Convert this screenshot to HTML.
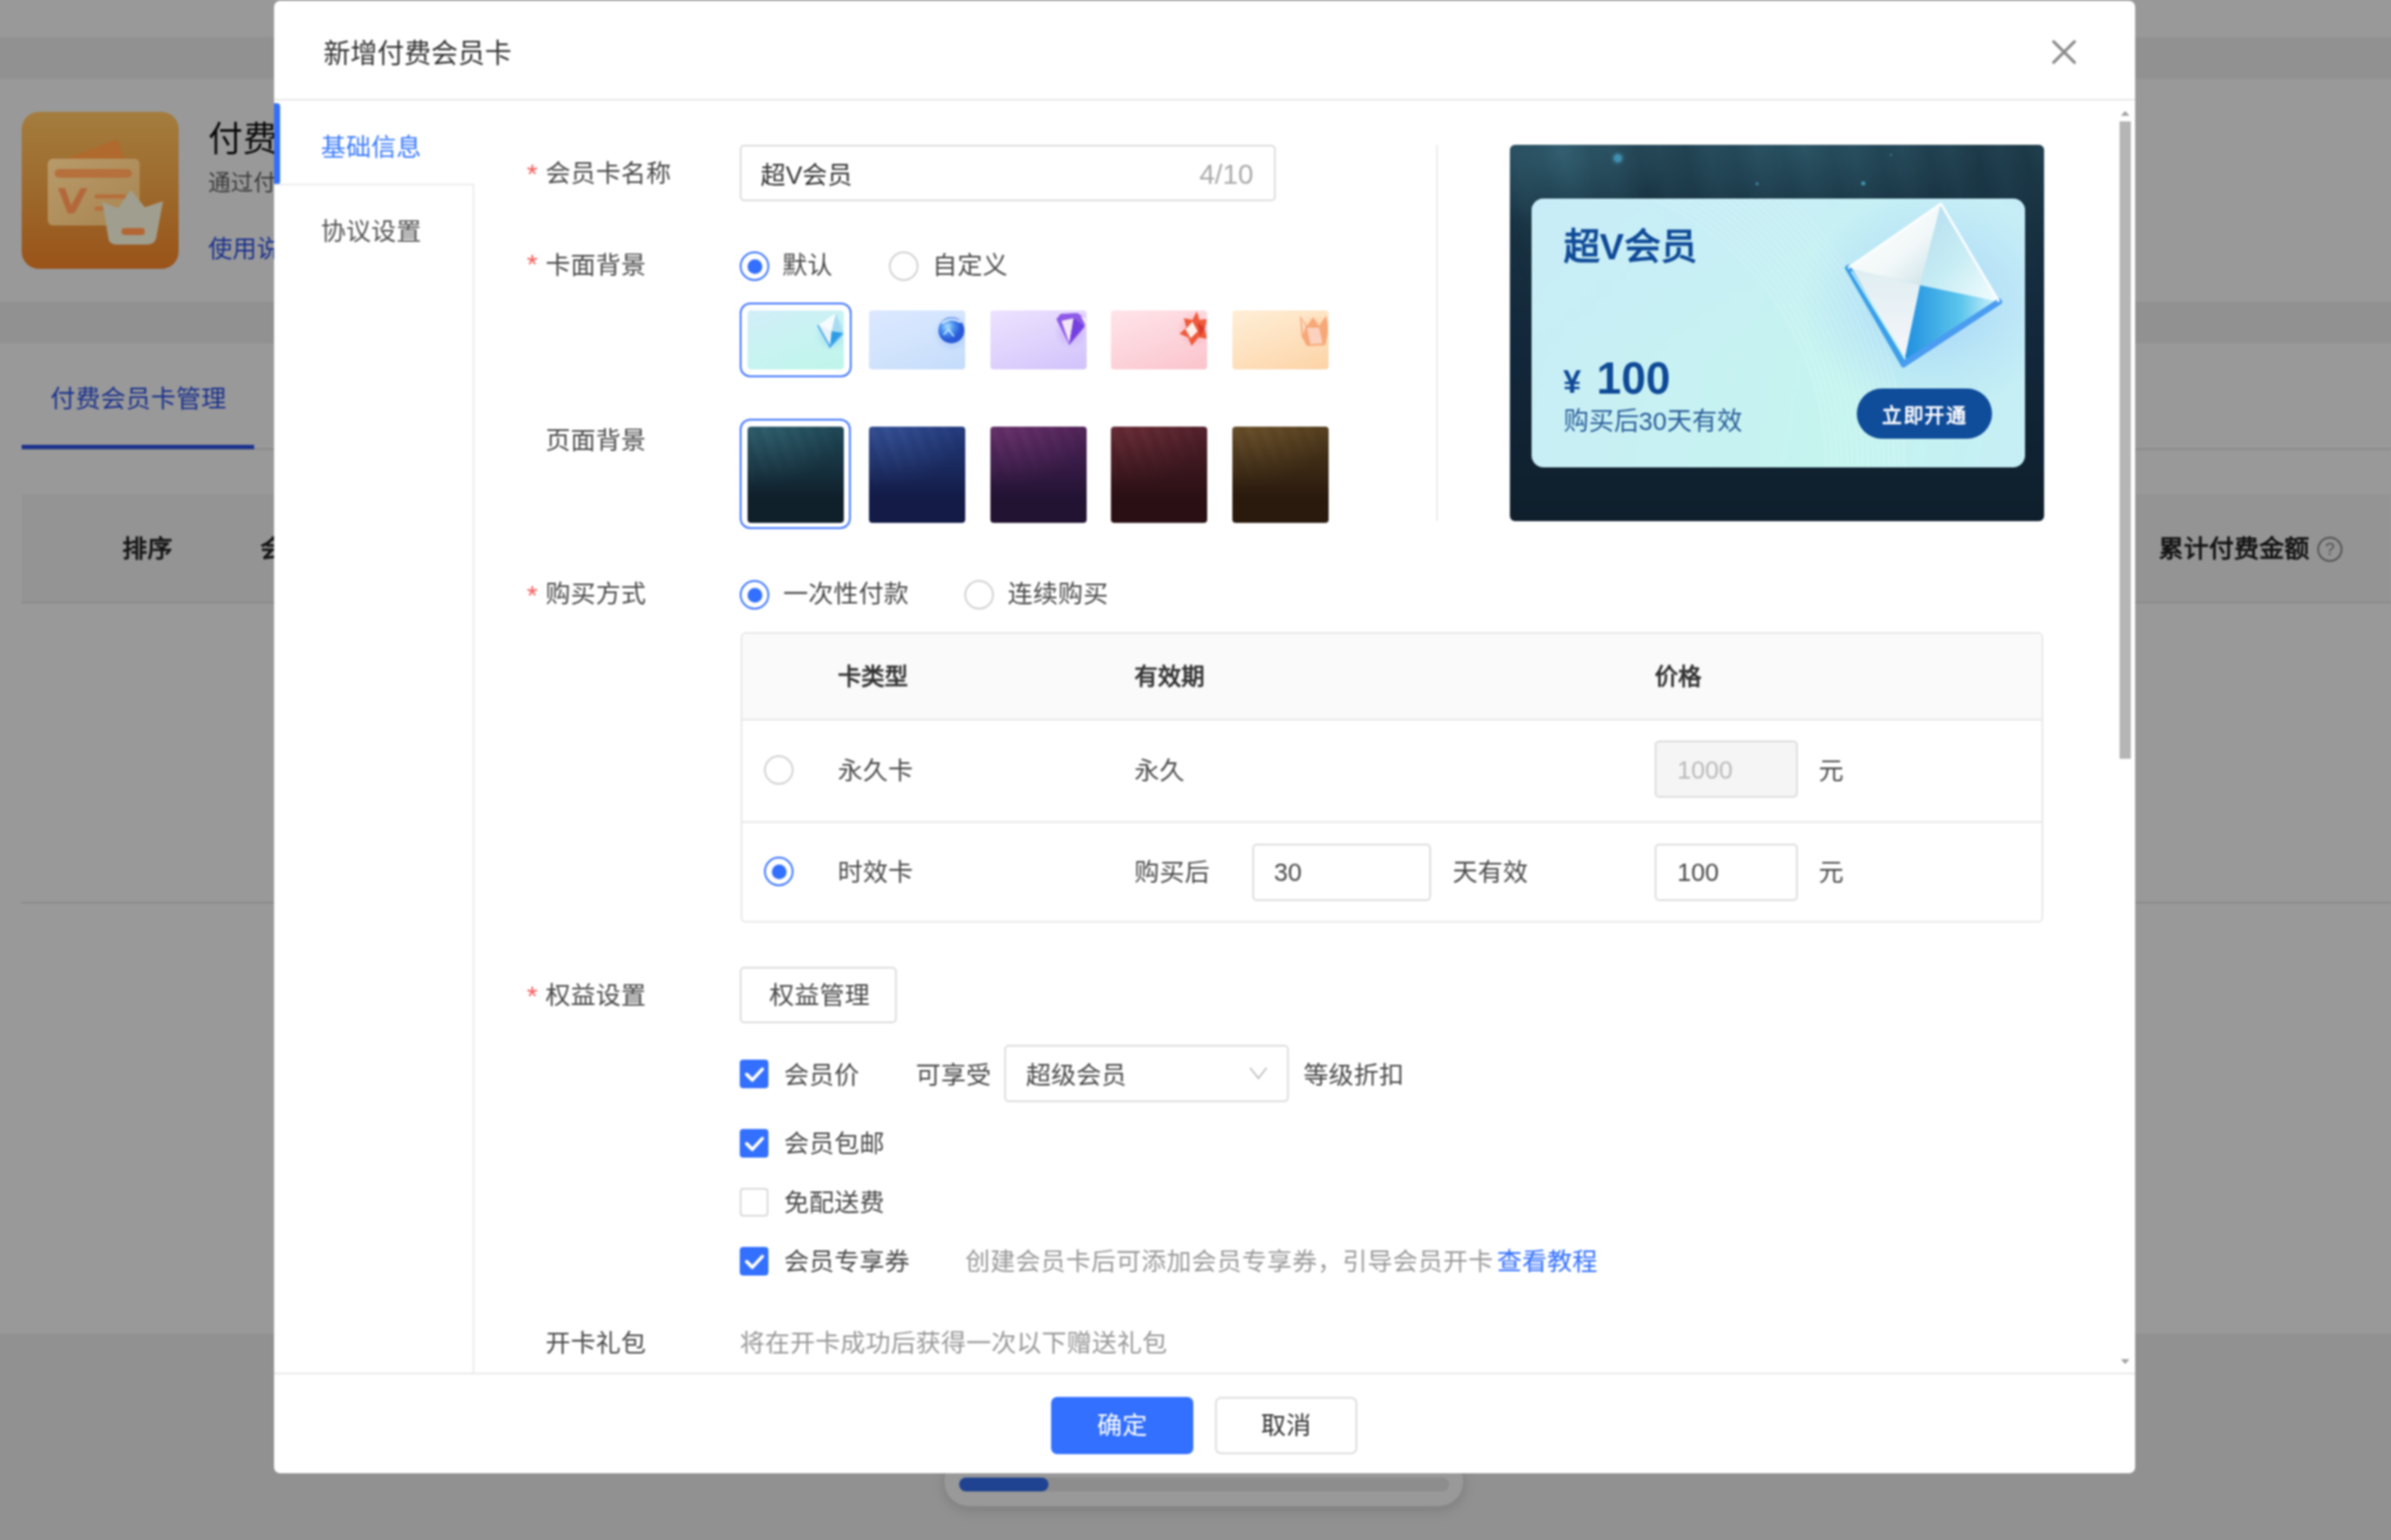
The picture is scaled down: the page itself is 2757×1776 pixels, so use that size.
<!DOCTYPE html>
<html lang="zh-CN">
<head>
<meta charset="utf-8">
<style>
*{box-sizing:border-box;margin:0;padding:0}
html,body{width:2757px;height:1776px;overflow:hidden}
body{position:relative;background:#fff;font-family:"Liberation Sans",sans-serif;color:#4a4a4a}
#root{position:absolute;left:-30px;top:-30px;width:2817px;height:1836px;filter:blur(0.8px)}
#inner{position:absolute;left:30px;top:30px;width:2757px;height:1776px}
.a{position:absolute}
.t{position:absolute;white-space:nowrap;font-size:28.8px;line-height:28.8px}
#page{position:absolute;left:-30px;top:-30px;width:2817px;height:1836px;background:#fff}
#ov{position:absolute;left:-30px;top:-30px;width:2817px;height:1836px;background:rgba(0,0,0,0.4)}
#modal{position:absolute;left:316px;top:1px;width:2146px;height:1698px;background:#fff;border-radius:7px;overflow:hidden}
.req{position:absolute;color:#f45a5a;font-size:32px;line-height:32px}
.lbl{color:#4a4a4a}
.inp{position:absolute;border:2px solid #dcdcdc;border-radius:5px;background:#fff}
.radio{position:absolute;width:34px;height:34px;border-radius:50%;border:2px solid #d0d0d0;background:#fff}
.radio.on{border:2.5px solid #3370ff}
.radio.on::after{content:"";position:absolute;left:50%;top:50%;width:17px;height:17px;margin:-8.5px 0 0 -8.5px;border-radius:50%;background:#3370ff}
.cb{position:absolute;width:33px;height:33px;border-radius:4px;background:#3370ff}
.cb.off{background:#fff;border:2px solid #d9d9d9}
.cb svg{position:absolute;left:0;top:0}
.thumb{position:absolute;width:111px;border-radius:4px;overflow:hidden}
</style>
</head>
<body>
<div id="root"><div id="inner">
<div id="page">
  <!-- bands -->
  <div class="a" style="left:0;top:73px;width:2817px;height:48px;background:#f2f2f2"></div>
  <div class="a" style="left:0;top:378px;width:2817px;height:48px;background:#f2f2f2"></div>
  <div class="a" style="left:0;top:1568px;width:2817px;height:268px;background:#f2f2f2"></div>
  <div class="a" style="left:30px;top:30px;width:2757px;height:1776px">
  <!-- icon -->
  
  <div class="t" style="left:240px;top:140px;font-size:40px;line-height:40px;color:#111">付费会员卡</div>
  <div class="t" style="left:240px;top:198px;font-size:26px;line-height:26px;color:#666">通过付费</div>
  <div class="t" style="left:240px;top:274px;font-size:28px;line-height:28px;color:#2f54eb">使用说明</div>
  <!-- tabs -->
  <div class="t" style="left:58px;top:446px;color:#2f54eb">付费会员卡管理</div>
  <div class="a" style="left:25px;top:517px;width:2732px;height:2px;background:#e8e8e8"></div>
  <div class="a" style="left:25px;top:513px;width:268px;height:5px;background:#2f54eb"></div>
  <!-- table header -->
  <div class="a" style="left:25px;top:570px;width:2732px;height:126px;background:#f7f7f7;border-bottom:2px solid #e6e6e6"></div>
  <div class="t" style="left:141px;top:619px;font-weight:bold;color:#222">排序</div>
  <div class="t" style="left:300px;top:619px;font-weight:bold;color:#222">会员卡</div>
  <div class="t" style="left:2489px;top:619px;font-weight:bold;color:#222">累计付费金额</div>
  <div class="a" style="left:2672px;top:619px;width:29px;height:29px;border-radius:50%;border:2px solid #888;color:#888;font-size:20px;line-height:25px;text-align:center">?</div>
  <div class="a" style="left:25px;top:1040px;width:2732px;height:2px;background:#e6e6e6"></div>
  <!-- bottom scroller pill -->
  <div class="a" style="left:1089px;top:1680px;width:598px;height:57px;border-radius:28px;background:#fff;box-shadow:0 4px 16px rgba(0,0,0,0.15)"></div>
  <div class="a" style="left:1106px;top:1704px;width:565px;height:16px;border-radius:8px;background:#ececec"></div>
  <div class="a" style="left:1106px;top:1704px;width:103px;height:16px;border-radius:8px;background:#3570f0"></div>
</div>
</div>
<div id="ov"></div>
<div class="a" style="left:25px;top:129px;width:181px;height:181px;border-radius:20px;overflow:hidden;background:linear-gradient(180deg,#a47d3e 0%,#9d6a2c 50%,#9a5319 100%)">
  <svg class="a" style="left:0;top:0" width="181" height="181" viewBox="0 0 181 181">
    <defs><linearGradient id="ic1" x1="0" y1="0" x2="1" y2="1"><stop offset="0" stop-color="#b89a6a"/><stop offset="1" stop-color="#a88550"/></linearGradient></defs>
    <path d="M52 54L106 33Q112 32 113 38L119 54Z" fill="#b06a2e"/>
    <rect x="30" y="54" width="106" height="77" rx="6" fill="url(#ic1)"/>
    <rect x="38" y="66" width="89" height="10" rx="5" fill="#b5703c"/>
    <path d="M42 88L50 88L57 108L68 88L76 88L61 117L53 117Z" fill="#b4683a"/>
    <rect x="84" y="95" width="36" height="5" rx="2.5" fill="#b5703c"/>
    <rect x="84" y="109" width="20" height="5" rx="2.5" fill="#b5703c"/>
        <path d="M93 104L111 111L126 90L142 110L163 103L155 146Q153 153 145 153L109 153Q101 153 100 146Z" fill="#a09e8e"/>
    <rect x="115" y="134" width="27" height="8" rx="4" fill="#b36634"/>
  </svg>
</div>

<div id="modal"><div class="a" style="left:-316px;top:-1px;width:2757px;height:1776px">
  <!-- header -->
  <div class="t" style="left:373px;top:46px;font-size:31px;line-height:31px;color:#333">新增付费会员卡</div>
  <svg class="a" style="left:2366px;top:46px" width="28" height="28" viewBox="0 0 28 28"><path d="M2 2L26 26M26 2L2 26" stroke="#8c8c8c" stroke-width="3.4" stroke-linecap="round"/></svg>
  <div class="a" style="left:316px;top:114px;width:2146px;height:2px;background:#e9e9e9"></div>
  <!-- nav -->
  <div class="a" style="left:316px;top:119px;width:7px;height:94px;background:#3370ff;border-radius:0 4px 4px 0"></div>
  <div class="t" style="left:370px;top:156px;color:#3a7afe">基础信息</div>
  <div class="a" style="left:316px;top:212px;width:231px;height:1372px;border-top:2px solid #ececec;border-right:2px solid #ececec"></div>
  <div class="t" style="left:370px;top:253px;color:#555">协议设置</div>

  <!-- row1 -->
  <div class="req" style="left:607.5px;top:184.5px">*</div>
  <div class="t lbl" style="left:629px;top:186px">会员卡名称</div>
  <div class="inp" style="left:853px;top:167px;width:618px;height:65px"></div>
  <div class="t" style="left:877px;top:188px;color:#333">超V会员</div>
  <div class="t" style="left:1383px;top:185px;font-size:32px;line-height:32px;color:#aaa">4/10</div>

  <!-- row2 -->
  <div class="req" style="left:607.5px;top:289px">*</div>
  <div class="t lbl" style="left:629px;top:292px">卡面背景</div>
  <div class="radio on" style="left:853px;top:290px"></div>
  <div class="t" style="left:902px;top:292px">默认</div>
  <div class="radio" style="left:1025px;top:290px"></div>
  <div class="t" style="left:1075px;top:292px">自定义</div>
  <div class="a" style="left:853px;top:349px;width:129px;height:86px;border:2.6px solid #3a72ff;border-radius:12px"></div>
  <div class="thumb" style="left:862px;top:358px;height:68px;background:linear-gradient(160deg,#d2eef8 0%,#c8f3f2 50%,#bff6ea 100%)"><svg class="a" style="left:0;top:0" width="110" height="68" viewBox="0 0 110 68"><defs><radialGradient id="gl1"><stop offset="0" stop-color="#7fc4f0" stop-opacity="0.55"/><stop offset="1" stop-color="#7fc4f0" stop-opacity="0"/></radialGradient></defs><ellipse cx="97" cy="27" rx="20" ry="20" fill="url(#gl1)"/><path d="M102 3L81 17L97 24Z" fill="#f6fcfe"/><path d="M102 3L110 26L97 24Z" fill="#a8dcf2"/><path d="M81 17L95 42L97 24Z" fill="#eaf2f8"/><path d="M97 24L110 26L95 42Z" fill="#2c9ce6"/><path d="M81 17L95 42L110 26" fill="none" stroke="#4aaaf0" stroke-width="2"/></svg></div>
<div class="thumb" style="left:1002px;top:358px;height:68px;background:linear-gradient(160deg,#dce8ff 0%,#d2e4fd 50%,#c4dcfb 100%)"><svg class="a" style="left:0;top:0" width="110" height="68" viewBox="0 0 110 68"><defs><radialGradient id="sp2" cx="0.35" cy="0.35"><stop offset="0" stop-color="#aee0ff"/><stop offset="0.5" stop-color="#4d94f0"/><stop offset="1" stop-color="#2a5ad8"/></radialGradient><radialGradient id="gl2"><stop offset="0" stop-color="#6a9cf5" stop-opacity="0.5"/><stop offset="1" stop-color="#6a9cf5" stop-opacity="0"/></radialGradient></defs><ellipse cx="96" cy="26" rx="22" ry="22" fill="url(#gl2)"/><circle cx="95" cy="23" r="15" fill="url(#sp2)"/><path d="M84 15Q95 6 106 14" fill="none" stroke="#e8f4ff" stroke-width="2"/><path d="M86 28L92 22L98 30" fill="none" stroke="#c8ecff" stroke-width="1.6"/></svg></div>
<div class="thumb" style="left:1142px;top:358px;height:68px;background:linear-gradient(160deg,#ede2ff 0%,#e0d3fd 50%,#d1c2fa 100%)"><svg class="a" style="left:0;top:0" width="110" height="68" viewBox="0 0 110 68"><defs><radialGradient id="gl3"><stop offset="0" stop-color="#a57cf0" stop-opacity="0.45"/><stop offset="1" stop-color="#a57cf0" stop-opacity="0"/></radialGradient></defs><ellipse cx="93" cy="24" rx="20" ry="20" fill="url(#gl3)"/><path d="M76 10L81 4L100 3L111 9L108 20L91 40Z" fill="#8d5ae8"/><path d="M82 12L96 9L91 38Z" fill="#f3e6f4"/><path d="M96 9L108 18L91 38Z" fill="#7440e0"/><path d="M104 6L111 9L110 18Z" fill="#f4f0ff"/></svg></div>
<div class="thumb" style="left:1281px;top:358px;height:68px;background:linear-gradient(160deg,#ffe4e9 0%,#fdd5dc 50%,#fbc3cb 100%)"><svg class="a" style="left:0;top:0" width="110" height="68" viewBox="0 0 110 68"><defs><radialGradient id="gl4"><stop offset="0" stop-color="#f07070" stop-opacity="0.4"/><stop offset="1" stop-color="#f07070" stop-opacity="0"/></radialGradient></defs><ellipse cx="96" cy="22" rx="20" ry="20" fill="url(#gl4)"/><path d="M99 1L102 11L111 10L108 21L111 33L101 31L93 41L89 31L79 27L87 20L84 9L94 11Z" fill="#ef5a3a"/><path d="M86 22L94 13L100 24L92 32Z" fill="#fff0ea"/><path d="M100 14L108 20L103 30Z" fill="#d83a2a"/></svg></div>
<div class="thumb" style="left:1421px;top:358px;height:68px;background:linear-gradient(160deg,#ffeed6 0%,#fee2c0 50%,#fdd3a6 100%)"><svg class="a" style="left:0;top:0" width="110" height="68" viewBox="0 0 110 68"><defs><radialGradient id="gl5"><stop offset="0" stop-color="#f59a5a" stop-opacity="0.35"/><stop offset="1" stop-color="#f59a5a" stop-opacity="0"/></radialGradient></defs><ellipse cx="95" cy="24" rx="20" ry="20" fill="url(#gl5)"/><path d="M78 6L86 18L93 8L100 18L108 6L111 22L107 40L86 41L80 30Z" fill="#f6a878"/><path d="M86 20L100 20L104 38L90 39Z" fill="#fbd2bf"/><path d="M80 10L84 18L82 28Z" fill="#fde8dc"/></svg></div>

  <!-- row3 -->
  <div class="t lbl" style="left:629px;top:494px">页面背景</div>
  <div class="a" style="left:853px;top:483px;width:128px;height:127px;border:2.6px solid #3a72ff;border-radius:12px"></div>
  <div class="thumb" style="left:862px;top:492px;height:111px;background:radial-gradient(ellipse 90px 70px at 20px 0px,rgba(80,150,165,0.25),rgba(0,0,0,0) 100%),linear-gradient(180deg,#1e4654 0%,#183442 35%,#10202b 75%,#10202b 100%)"><div class="a" style="left:0;top:0;width:110px;height:111px;background:repeating-linear-gradient(70deg,rgba(255,255,255,0) 0px,rgba(255,255,255,0.045) 7px,rgba(255,255,255,0) 16px);-webkit-mask-image:linear-gradient(160deg,#000,transparent 55%)"></div></div>
<div class="thumb" style="left:1002px;top:492px;height:111px;background:radial-gradient(ellipse 90px 70px at 20px 0px,rgba(90,130,210,0.25),rgba(0,0,0,0) 100%),linear-gradient(180deg,#22397a 0%,#1b2c62 35%,#131b46 75%,#131b46 100%)"><div class="a" style="left:0;top:0;width:110px;height:111px;background:repeating-linear-gradient(70deg,rgba(255,255,255,0) 0px,rgba(255,255,255,0.045) 7px,rgba(255,255,255,0) 16px);-webkit-mask-image:linear-gradient(160deg,#000,transparent 55%)"></div></div>
<div class="thumb" style="left:1142px;top:492px;height:111px;background:radial-gradient(ellipse 90px 70px at 20px 0px,rgba(170,80,160,0.22),rgba(0,0,0,0) 100%),linear-gradient(180deg,#4f2356 0%,#3a1c48 35%,#221333 75%,#221333 100%)"><div class="a" style="left:0;top:0;width:110px;height:111px;background:repeating-linear-gradient(70deg,rgba(255,255,255,0) 0px,rgba(255,255,255,0.045) 7px,rgba(255,255,255,0) 16px);-webkit-mask-image:linear-gradient(160deg,#000,transparent 55%)"></div></div>
<div class="thumb" style="left:1281px;top:492px;height:111px;background:radial-gradient(ellipse 90px 70px at 20px 0px,rgba(170,70,80,0.2),rgba(0,0,0,0) 100%),linear-gradient(180deg,#52202a 0%,#3e1820 35%,#2a1014 75%,#2a1014 100%)"><div class="a" style="left:0;top:0;width:110px;height:111px;background:repeating-linear-gradient(70deg,rgba(255,255,255,0) 0px,rgba(255,255,255,0.045) 7px,rgba(255,255,255,0) 16px);-webkit-mask-image:linear-gradient(160deg,#000,transparent 55%)"></div></div>
<div class="thumb" style="left:1421px;top:492px;height:111px;background:radial-gradient(ellipse 90px 70px at 20px 0px,rgba(170,130,70,0.2),rgba(0,0,0,0) 100%),linear-gradient(180deg,#543e1e 0%,#3e2c16 35%,#2a1a0e 75%,#2a1a0e 100%)"><div class="a" style="left:0;top:0;width:110px;height:111px;background:repeating-linear-gradient(70deg,rgba(255,255,255,0) 0px,rgba(255,255,255,0.045) 7px,rgba(255,255,255,0) 16px);-webkit-mask-image:linear-gradient(160deg,#000,transparent 55%)"></div></div>

  <div class="a" style="left:1656px;top:167px;width:2px;height:434px;background:#ececec"></div>
  <div class="a" style="left:1741px;top:167px;width:616px;height:434px;border-radius:6px;overflow:hidden;background:linear-gradient(180deg,#1d3a48 0%,#173040 25%,#12273a 55%,#0f1f2c 100%)">
    <div class="a" style="left:0;top:0;width:616px;height:434px;background:radial-gradient(ellipse 120px 90px at 60px 10px,rgba(70,130,150,0.45),rgba(70,130,150,0) 100%),radial-gradient(ellipse 220px 90px at 330px 0px,rgba(60,120,140,0.35),rgba(60,120,140,0) 100%)"></div>
    <div class="a" style="left:0;top:0;width:616px;height:434px;background:repeating-linear-gradient(80deg,rgba(120,200,230,0) 0px,rgba(120,200,230,0.05) 25px,rgba(120,200,230,0) 55px);-webkit-mask-image:linear-gradient(180deg,#000 0%,transparent 40%)"></div>
    <div class="a" style="left:120px;top:11px;width:9px;height:9px;border-radius:50%;background:#3f8fb0;box-shadow:0 0 5px #4fa8c8"></div><div class="a" style="left:283px;top:43px;width:4px;height:4px;border-radius:50%;background:#3a7a90"></div><div class="a" style="left:405px;top:42px;width:5px;height:5px;border-radius:50%;background:#3f8fa8"></div><div class="a" style="left:438px;top:10px;width:3px;height:3px;border-radius:50%;background:#3a7080"></div>
    <div class="a" style="left:24.6px;top:62px;width:569px;height:310px;border-radius:14px;overflow:hidden;background:linear-gradient(100deg,#c9eef6 0%,#c7f2f2 40%,#c5f5ef 65%,#c6eef6 100%)">
      <div class="a" style="left:0;top:0;width:569px;height:310px;background:linear-gradient(180deg,rgba(200,235,250,0.5),rgba(200,245,240,0) 60%)"></div>
      <div class="a" style="left:0;top:0;width:569px;height:310px;background:radial-gradient(ellipse 150px 130px at 460px 120px,rgba(150,200,250,0.75) 0,rgba(170,215,250,0.45) 55%,rgba(190,235,250,0) 100%)"></div>
      <svg class="a" style="left:0;top:0" width="569" height="310" viewBox="0 0 569 310"><g fill="none" stroke="#ffffff" stroke-opacity="0.3" stroke-width="1"><circle cx="0" cy="310" r="340"/><circle cx="0" cy="310" r="346"/><circle cx="0" cy="310" r="352"/><circle cx="0" cy="310" r="358"/><circle cx="0" cy="310" r="364"/><circle cx="0" cy="310" r="370"/><circle cx="0" cy="310" r="376"/><circle cx="0" cy="310" r="382"/><circle cx="0" cy="310" r="388"/><circle cx="0" cy="310" r="394"/><circle cx="0" cy="310" r="400"/><circle cx="0" cy="310" r="406"/><circle cx="0" cy="310" r="412"/><circle cx="0" cy="310" r="418"/><circle cx="0" cy="310" r="424"/><circle cx="0" cy="310" r="430"/></g></svg>
      <svg class="a" style="left:0;top:0" width="569" height="310" viewBox="0 0 569 310">
        <defs>
          <linearGradient id="dtl" x1="0" y1="0" x2="1" y2="1"><stop offset="0" stop-color="#ffffff"/><stop offset="0.6" stop-color="#f2f8f9"/><stop offset="1" stop-color="#c9dfe6"/></linearGradient>
          <linearGradient id="dtr" x1="0" y1="0" x2="1" y2="1"><stop offset="0" stop-color="#b5dcef"/><stop offset="0.5" stop-color="#c6ecf4"/><stop offset="1" stop-color="#f4fdfe"/></linearGradient>
          <linearGradient id="dbl" x1="0" y1="0" x2="0" y2="1"><stop offset="0" stop-color="#dfeef2"/><stop offset="1" stop-color="#f8f6fb"/></linearGradient>
          <linearGradient id="dbr" x1="0" y1="0" x2="1" y2="0"><stop offset="0" stop-color="#1f8ee0"/><stop offset="0.6" stop-color="#5cc6ec"/><stop offset="1" stop-color="#d8f6fb"/></linearGradient>
        </defs>
        <path d="M472 6L365 80L448 100Z" fill="url(#dtl)"/>
        <path d="M472 6L539 119L448 100Z" fill="url(#dtr)"/>
        <path d="M365 80L429 191L448 100Z" fill="url(#dbl)"/>
        <path d="M448 100L539 119L429 191Z" fill="url(#dbr)"/>
        <path d="M365 80L429 191" stroke="#3d9fe8" stroke-width="7" stroke-linecap="round"/>
        <path d="M429 191L539 119" stroke="#4a9cf0" stroke-width="7" stroke-linecap="round"/>
        <path d="M369 84L431 185" stroke="#bff4fb" stroke-width="2"/>
        <path d="M365 80L472 6L539 119" fill="none" stroke="#ffffff" stroke-width="3" stroke-linejoin="round" opacity="0.9"/>
      </svg>
      <div class="t" style="left:37px;top:35px;font-size:42px;line-height:42px;font-weight:bold;color:#0f4a97">超V会员</div>
      <div class="t" style="left:37px;top:192.5px;font-size:37px;line-height:37px;font-weight:bold;color:#0f4a97">¥</div>
      <div class="t" style="left:75.5px;top:181.5px;font-size:51px;line-height:51px;font-weight:bold;color:#0f4a97">100</div>
      <div class="t" style="left:37px;top:243px;font-size:29px;line-height:29px;color:#2a5d99">购买后30天有效</div>
      <div class="a" style="left:375px;top:219px;width:156px;height:58px;border-radius:29px;background:#0f4c9a;color:#fff;font-size:23px;line-height:62px;letter-spacing:1.5px;text-indent:1.5px;text-align:center;font-weight:bold">立即开通</div>
    </div>
  </div>

  <!-- row4 -->
  <div class="req" style="left:607.5px;top:671px">*</div>
  <div class="t lbl" style="left:629px;top:671px">购买方式</div>
  <div class="radio on" style="left:853px;top:669px"></div>
  <div class="t" style="left:903px;top:671px">一次性付款</div>
  <div class="radio" style="left:1112px;top:669px"></div>
  <div class="t" style="left:1162px;top:671px">连续购买</div>

  <!-- table -->
  <div class="a" style="left:854px;top:729px;width:1502px;height:335px;border:2px solid #e8e8e8;border-radius:6px;overflow:hidden">
    <div class="a" style="left:0;top:0;width:1500px;height:100px;background:#fafafa;border-bottom:2px solid #e8e8e8"></div>
    <div class="a" style="left:0;top:216px;width:1500px;height:2px;background:#e8e8e8"></div>
  </div>
  <div class="t" style="left:966px;top:767.5px;font-size:27px;line-height:27px;font-weight:bold;color:#333">卡类型</div>
  <div class="t" style="left:1308px;top:767.5px;font-size:27px;line-height:27px;font-weight:bold;color:#333">有效期</div>
  <div class="t" style="left:1908px;top:767.5px;font-size:27px;line-height:27px;font-weight:bold;color:#333">价格</div>
  <div class="radio" style="left:881px;top:871px"></div>
  <div class="t" style="left:966px;top:875px">永久卡</div>
  <div class="t" style="left:1308px;top:875px">永久</div>
  <div class="inp" style="left:1908px;top:854px;width:165px;height:66px;background:#f5f5f5"></div>
  <div class="t" style="left:1934px;top:874px;color:#bbb">1000</div>
  <div class="t" style="left:2097px;top:875px">元</div>
  <div class="radio on" style="left:881px;top:988px"></div>
  <div class="t" style="left:966px;top:992px">时效卡</div>
  <div class="t" style="left:1308px;top:992px">购买后</div>
  <div class="inp" style="left:1444px;top:973px;width:206px;height:66px"></div>
  <div class="t" style="left:1469px;top:992px">30</div>
  <div class="t" style="left:1675px;top:992px">天有效</div>
  <div class="inp" style="left:1908px;top:973px;width:165px;height:66px"></div>
  <div class="t" style="left:1934px;top:992px">100</div>
  <div class="t" style="left:2097px;top:992px">元</div>

  <!-- rights -->
  <div class="req" style="left:607.5px;top:1133px">*</div>
  <div class="t lbl" style="left:629px;top:1134px">权益设置</div>
  <div class="inp" style="left:853px;top:1115px;width:181px;height:65px"></div>
  <div class="t" style="left:887px;top:1134px">权益管理</div>

  <div class="cb" style="left:853px;top:1222px"><svg width="33" height="33" viewBox="0 0 33 33"><path d="M8 17L14.5 23.5L26 11" fill="none" stroke="#fff" stroke-width="4" stroke-linecap="round" stroke-linejoin="round"/></svg></div>
  <div class="t" style="left:904px;top:1226px">会员价</div>
  <div class="t" style="left:1056px;top:1226px">可享受</div>
  <div class="inp" style="left:1158px;top:1205px;width:328px;height:66px"></div>
  <div class="t" style="left:1183px;top:1226px">超级会员</div>
  <svg class="a" style="left:1440px;top:1229px" width="22" height="18" viewBox="0 0 22 18"><path d="M1.5 2.5L11 14.5L20.5 2.5" fill="none" stroke="#bdbdbd" stroke-width="1.9"/></svg>
  <div class="t" style="left:1503px;top:1226px">等级折扣</div>

  <div class="cb" style="left:853px;top:1302px"><svg width="33" height="33" viewBox="0 0 33 33"><path d="M8 17L14.5 23.5L26 11" fill="none" stroke="#fff" stroke-width="4" stroke-linecap="round" stroke-linejoin="round"/></svg></div>
  <div class="t" style="left:904px;top:1305px">会员包邮</div>
  <div class="cb off" style="left:853px;top:1370px"></div>
  <div class="t" style="left:904px;top:1373px">免配送费</div>
  <div class="cb" style="left:853px;top:1438px"><svg width="33" height="33" viewBox="0 0 33 33"><path d="M8 17L14.5 23.5L26 11" fill="none" stroke="#fff" stroke-width="4" stroke-linecap="round" stroke-linejoin="round"/></svg></div>
  <div class="t" style="left:904px;top:1441px">会员专享券</div>
  <div class="t" style="left:1113px;top:1441px;font-size:28.6px;color:#999">创建会员卡后可添加会员专享券，引导会员开卡</div>
  <div class="t" style="left:1726px;top:1441px;color:#3370ff">查看教程</div>

  <div class="t lbl" style="left:629px;top:1535px">开卡礼包</div>
  <div class="t" style="left:853px;top:1535px;color:#999">将在开卡成功后获得一次以下赠送礼包</div>

  <!-- scrollbar -->
  <svg class="a" style="left:2444px;top:126px" width="13" height="9" viewBox="0 0 13 9"><path d="M1.5 7.5L6.5 2L11.5 7.5Z" fill="#a0a0a0"/></svg>
  <div class="a" style="left:2444px;top:140px;width:13px;height:735px;background:#b5b5b5"></div>
  <svg class="a" style="left:2444px;top:1566px" width="13" height="9" viewBox="0 0 13 9"><path d="M1.5 1.5L6.5 7L11.5 1.5Z" fill="#a0a0a0"/></svg>

  <!-- footer -->
  <div class="a" style="left:316px;top:1583px;width:2146px;height:2px;background:#e9e9e9"></div>
  <div class="a" style="left:1212px;top:1611px;width:164px;height:66px;border-radius:7px;background:#3370ff;color:#fff;font-size:28.8px;line-height:66px;text-align:center">确定</div>
  <div class="a" style="left:1401px;top:1611px;width:164px;height:66px;border-radius:7px;border:2px solid #dcdcdc;color:#333;font-size:28.8px;line-height:62px;text-align:center">取消</div>
</div></div>
</div></div>
</body>
</html>
